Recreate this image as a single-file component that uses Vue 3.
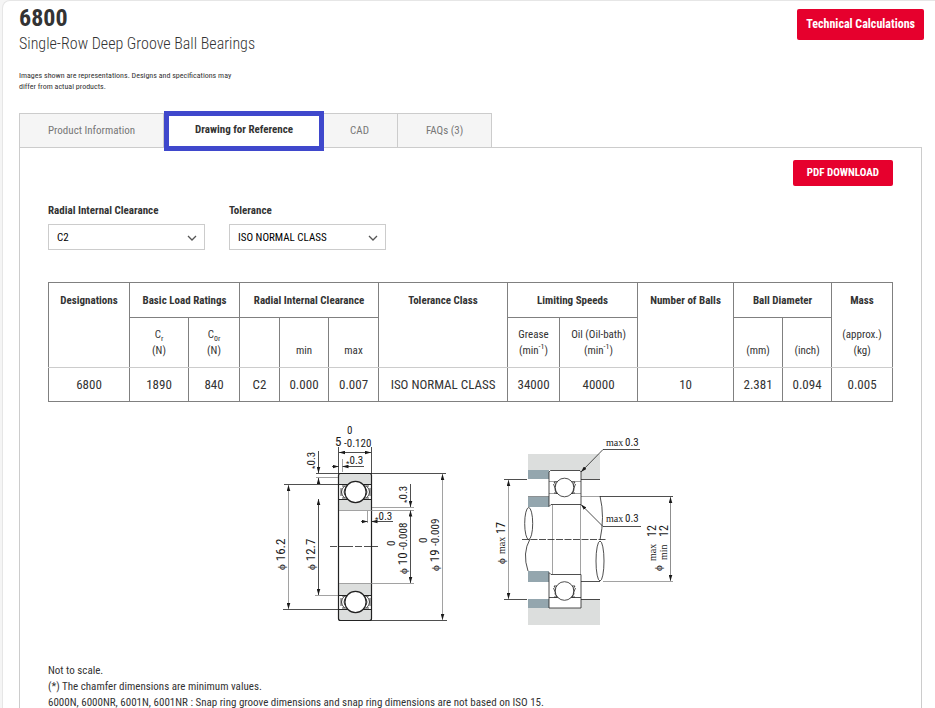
<script setup>
import { ref } from 'vue'

const clearance = ref('C2')
const tolerance = ref('ISO NORMAL CLASS')
const active = ref('drawing')

const tabs = [
  { id: 'info', label: 'Product Information' },
  { id: 'drawing', label: 'Drawing for Reference' },
  { id: 'cad', label: 'CAD' },
  { id: 'faq', label: 'FAQs (3)' }
]

const row = ['6800', '1890', '840', 'C2', '0.000', '0.007', 'ISO NORMAL CLASS', '34000', '40000', '10', '2.381', '0.094', '0.005']
</script>

<template>
  <main class="card">
    <header class="head">
      <div class="titles">
        <h1>6800</h1>
        <p class="subtitle">Single-Row Deep Groove Ball Bearings</p>
        <p class="note">Images shown are representations. Designs and specifications may differ from actual products.</p>
      </div>
      <button type="button" class="btn btn-tall">Technical Calculations</button>
    </header>

    <nav class="tabs">
      <button
        v-for="t in tabs"
        :key="t.id"
        type="button"
        :class="['tab', { active: active === t.id }]"
        @click="active = t.id"
      >{{ t.label }}</button>
    </nav>

    <section class="panel">
      <div class="actions">
        <button type="button" class="btn">PDF DOWNLOAD</button>
      </div>

      <div class="filters">
        <div class="field">
          <label for="clearance">Radial Internal Clearance</label>
          <div class="select">
            <select id="clearance" v-model="clearance"><option>C2</option></select>
            <svg class="chevron" viewBox="0 0 10 6" aria-hidden="true"><path d="M1 1l4 4 4-4" /></svg>
          </div>
        </div>
        <div class="field">
          <label for="tolerance">Tolerance</label>
          <div class="select">
            <select id="tolerance" v-model="tolerance"><option>ISO NORMAL CLASS</option></select>
            <svg class="chevron" viewBox="0 0 10 6" aria-hidden="true"><path d="M1 1l4 4 4-4" /></svg>
          </div>
        </div>
      </div>

      <table class="specs">
        <colgroup>
          <col class="w81"><col class="w59"><col class="w51"><col class="w40"><col class="w49"><col class="w50"><col class="w129"><col class="w52"><col class="w78"><col class="w96"><col class="w49"><col class="w49"><col class="w61">
        </colgroup>
        <thead>
          <tr class="groups">
            <th rowspan="2">Designations</th>
            <th colspan="2">Basic Load Ratings</th>
            <th colspan="3">Radial Internal Clearance</th>
            <th rowspan="2">Tolerance Class</th>
            <th colspan="2">Limiting Speeds</th>
            <th rowspan="2">Number of Balls</th>
            <th colspan="2">Ball Diameter</th>
            <th rowspan="2">Mass<span class="unit">(approx.)<br>(kg)</span></th>
          </tr>
          <tr class="units">
            <th>C<sub>r</sub><br>(N)</th>
            <th>C<sub>0r</sub><br>(N)</th>
            <th></th>
            <th>min</th>
            <th>max</th>
            <th>Grease<br>(min<sup>-1</sup>)</th>
            <th>Oil (Oil-bath)<br>(min<sup>-1</sup>)</th>
            <th>(mm)</th>
            <th>(inch)</th>
          </tr>
        </thead>
        <tbody>
          <tr><td v-for="(cell, i) in row" :key="i">{{ cell }}</td></tr>
        </tbody>
      </table>

      <svg class="drawing" viewBox="266 420 410 212" role="img" aria-label="Bearing dimensions">
        <defs>
          <marker id="arw" viewBox="0 0 6 4" refX="6" refY="2" markerWidth="6" markerHeight="4" markerUnits="userSpaceOnUse" orient="auto-start-reverse">
            <path d="M0 0.2L6 2L0 3.8z" fill="#1a1a1a" />
          </marker>
        </defs>

        <!-- bearing cross-section -->
        <g fill="#dcdedd">
          <rect x="338.5" y="473.5" width="33" height="11" />
          <rect x="338.5" y="499" width="33" height="11" />
          <rect x="338.5" y="584" width="33" height="11" />
          <rect x="338.5" y="609.5" width="33" height="11" />
        </g>
        <g class="seal">
          <path d="M344.500 486q-6 6 0 12M347 486.500q-6 5.500 0 11M342 486h6M342 498h6M341 488v8M366.500 486q6 6 0 12M364 486.500q6 5.500 0 11M363 486h6M363 498h6M370 488v8" />
          <path d="M344.500 596q-6 6 0 12M347 596.500q-6 5.500 0 11M342 596h6M342 608h6M341 598v8M366.500 596q6 6 0 12M364 596.500q6 5.500 0 11M363 596h6M363 608h6M370 598v8" />
        </g>
        <g class="solid">
          <path d="M338.500 484.500h33M338.500 499.500h33M338.500 595.500h33M338.500 609.500h33" />
          <rect x="338.500" y="473.500" width="33" height="147" rx="2" />
          <circle cx="355.500" cy="492" r="10.600" fill="#fff" />
          <circle cx="355.500" cy="602" r="10.600" fill="#fff" />
        </g>
        <path class="grey" d="M339 510.500h75M339 583.500h75" />
        <path class="thin" d="M330 546.500h50" stroke-dasharray="7 2 14 2" />
        <path class="thin" d="M316 473.500h130M284 484.500h54M283 609.500h55M371 620.500h76M338.500 447v27M371.500 447v27" />
        <path class="grey" d="M316 477.500h22M315 595.500h23M372 507.500h42M342.500 459v13M367.500 511v12" />
        <g class="thin">
          <path d="M339 452.500H371" marker-start="url(#arw)" marker-end="url(#arw)" />
          <path d="M332 466.500H338.500" marker-end="url(#arw)" />
          <path d="M364 466.500H342.500" marker-end="url(#arw)" />
          <path d="M318.500 451V473" marker-end="url(#arw)" />
          <path d="M318.500 484V478" marker-end="url(#arw)" />
          <path d="M318.500 499V595" marker-start="url(#arw)" marker-end="url(#arw)" />
          <path d="M410.500 484V507" marker-end="url(#arw)" />
          <path d="M410.500 510.500V583" marker-start="url(#arw)" marker-end="url(#arw)" />
          <path d="M361 521.500H367.500" marker-end="url(#arw)" />
          <path d="M393 521.500H371.500" marker-end="url(#arw)" />
        </g>
        <g class="grey">
          <path d="M288.500 485V609" marker-start="url(#arw)" marker-end="url(#arw)" />
          <path d="M442.500 474V620" marker-start="url(#arw)" marker-end="url(#arw)" />
        </g>
        <g class="dim">
          <text class="s" x="347" y="434">0</text>
          <text x="335" y="446">5</text>
          <text class="s" x="344" y="447">-0.120</text>
          <text class="s" x="346" y="464"><tspan class="xs" dy="2">*</tspan><tspan dy="-2">0.3</tspan></text>
          <text class="s" x="375" y="520"><tspan class="xs" dy="2">*</tspan><tspan dy="-2">0.3</tspan></text>
          <text class="s" transform="translate(315 469) rotate(-90)"><tspan class="xs" dy="2">*</tspan><tspan dy="-2">0.3</tspan></text>
          <text class="s" transform="translate(407 503) rotate(-90)"><tspan class="xs" dy="2">*</tspan><tspan dy="-2">0.3</tspan></text>
          <text transform="translate(285 570) rotate(-90)"><tspan class="phi">ϕ</tspan> 16.2</text>
          <text transform="translate(315 570) rotate(-90)"><tspan class="phi">ϕ</tspan> 12.7</text>
          <text transform="translate(407 574) rotate(-90)"><tspan class="phi">ϕ</tspan> 10</text>
          <text class="s" transform="translate(407 550) rotate(-90)">-0.008</text>
          <text class="s" transform="translate(395 546) rotate(-90)">0</text>
          <text transform="translate(439 571) rotate(-90)"><tspan class="phi">ϕ</tspan> 19</text>
          <text class="s" transform="translate(439 546) rotate(-90)">-0.009</text>
          <text class="s" transform="translate(427 543) rotate(-90)">0</text>
        </g>

        <!-- mounting dimensions -->
        <g fill="#dcdedd">
          <path d="M528 454h72v25h-19v-9h-53z" />
          <path d="M528 608h53v-9h19v26h-72z" />
        </g>
        <g fill="#94a6ae">
          <rect x="528" y="470" width="21" height="9" />
          <rect x="528" y="496" width="21" height="11" />
          <rect x="528" y="571" width="21" height="11" />
          <rect x="528" y="599" width="21" height="9" />
        </g>
        <path class="grey" d="M552.500 505v69M580.500 505v69M549 493.500h32M549 481.500h32M581 496.500h19M528 496.500h21M603 581.500h70M670.500 497v84" />
        <g class="thin">
          <path d="M549 472l1.500-1.500h29.500l1 1.500v32.500h-30l-2 2zM549 608v-35.500l2 2h30v33.500zM549 597.500h32" />
          <path d="M581 479.500h19M581 599.500h19M600 496.500h73M581 581.500h19" />
          <path d="M504 479.500h23M504 599.500h23" />
          <path d="M522 539.500h85" stroke-dasharray="7 1.500" />
        </g>
        <g class="seal">
          <path d="M557 482h-3l2 3-1 5 2 4M554 493h4M553.500 484l3 8M572 482h3l-2 3 1 5-2 4M571 493h4M575.500 484l-3 8" />
          <path d="M557 586h-3l2 3-1 5 2 3M554 597h4M553.500 588l3 7M572 586h3l-2 3 1 5-2 3M571 597h4M575.500 588l-3 7" />
        </g>
        <g class="thin">
          <circle cx="564.500" cy="487.500" r="9.300" fill="#fff" />
          <circle cx="564.500" cy="591" r="9.300" fill="#fff" />
          <ellipse cx="528.700" cy="523.500" rx="4" ry="16" />
          <ellipse cx="600" cy="561" rx="4" ry="20" />
          <path d="M530 539q-8 14-2 32M600 496q5 21 0 44" />
        </g>
        <g class="grey"><path d="M508.500 480V599" marker-start="url(#arw)" marker-end="url(#arw)" /></g>
        <g class="thin">
          <path d="M640 449.500H603L581 472" marker-end="url(#arw)" />
          <path d="M641 526.500H603L581 504.500" marker-end="url(#arw)" />
        </g>
        <g class="grey"><path d="M670.500 497V581" marker-start="url(#arw)" marker-end="url(#arw)" /></g>
        <g class="dim">
          <text class="serif" x="606" y="446">max</text><text class="s" x="625" y="446">0.3</text>
          <text class="serif" x="606" y="522">max</text><text class="s" x="625" y="522">0.3</text>
          <text class="phi" transform="translate(505 564) rotate(-90)">ϕ</text>
          <text class="serif" transform="translate(505 554) rotate(-90)">max</text>
          <text class="m" transform="translate(505 534) rotate(-90)">17</text>
          <text class="phi" transform="translate(662 571) rotate(-90)">ϕ</text>
          <text class="serif" transform="translate(656 561) rotate(-90)">max</text>
          <text class="m" transform="translate(656 537) rotate(-90)">12</text>
          <text class="serif" transform="translate(667 560) rotate(-90)">min</text>
          <text class="m" transform="translate(668 537) rotate(-90)">12</text>
        </g>
      </svg>

      <div class="remarks">
        <p>Not to scale.</p>
        <p>(*) The chamfer dimensions are minimum values.</p>
        <p>6000N, 6000NR, 6001N, 6001NR : Snap ring groove dimensions and snap ring dimensions are not based on ISO 15.</p>
      </div>
    </section>
  </main>
</template>

<style>
body {
  background: #f5f5f5;
}
</style>

<style scoped>
.card {
  margin-left: 2px;
  padding: 5px 13px 0 16px;
  border-top: 1px solid #e6e6e6;
  border-left: 1px solid #e6e6e6;
  border-top-left-radius: 8px;
  background: #fff;
  color: #333;
  font-family: "Roboto Condensed", "Liberation Sans Narrow", Roboto, sans-serif;
  font-size: 11px;
  line-height: 16px;
}
h1,
p {
  margin: 0;
}
button,
select {
  font: inherit;
}
.head {
  display: flex;
  justify-content: space-between;
  align-items: flex-start;
  margin-right: -2px;
}
h1 {
  font-size: 24px;
  line-height: 24px;
}
.subtitle {
  margin-top: 4px;
  font-size: 16px;
  line-height: 20px;
  font-weight: 300;
}
.note {
  max-width: 230px;
  margin-top: 16px;
  font-size: 8px;
  line-height: 11px;
}
.btn {
  height: 26px;
  padding: 0 14px;
  border: 0;
  border-radius: 2px;
  background: #e6002d;
  color: #fff;
  font-weight: 700;
}
.btn-tall {
  height: 31px;
  margin-top: 3px;
  padding: 0 9px 2px;
  font-size: 12px;
}
.tabs {
  display: flex;
  align-items: stretch;
  height: 34px;
  margin-top: 21px;
}
.tab {
  padding: 0 28px;
  border: 1px solid #ccc;
  border-bottom: 0;
  background: #f5f5f5;
  color: #777;
}
.tab + .tab {
  border-left: 0;
}
.tab.active {
  position: relative;
  margin: -2px -2px -4px 0;
  padding: 0 26px 2px;
  border: 5px solid #3f48cc;
  background: #fff;
  color: #333;
  font-weight: 700;
}
.panel {
  padding: 12px 28px 40px;
  border: 1px solid #ccc;
}
.actions {
  display: flex;
  justify-content: flex-end;
}
.filters {
  display: flex;
  gap: 24px;
  margin-top: 17px;
}
.field {
  display: flex;
  flex-direction: column;
  gap: 5px;
  width: 157px;
}
.field label {
  font-weight: 700;
}
.select {
  display: grid;
  align-items: center;
}
.select > * {
  grid-area: 1 / 1;
}
select {
  width: 100%;
  height: 26px;
  padding: 1px 8px 0;
  border: 1px solid #ccc;
  border-radius: 0;
  background: #fff;
  color: #000;
  appearance: none;
}
.chevron {
  justify-self: end;
  width: 10px;
  height: 6px;
  margin-right: 8px;
  margin-top: 2px;
  fill: none;
  stroke: #555;
  stroke-width: 1.3;
  pointer-events: none;
}
.specs {
  width: 100%;
  margin-top: 32px;
  border-collapse: collapse;
  table-layout: fixed;
  text-align: center;
}
.w40 { width: 40px; }
.w49 { width: 49px; }
.w50 { width: 50px; }
.w51 { width: 51px; }
.w52 { width: 52px; }
.w59 { width: 59px; }
.w61 { width: 61px; }
.w78 { width: 78px; }
.w81 { width: 81px; }
.w96 { width: 96px; }
.w129 { width: 129px; }
th,
td {
  padding: 0;
  border: 1px solid #808080;
  white-space: nowrap;
}
.groups th {
  height: 24px;
  padding-top: 10px;
  vertical-align: top;
}
.units th {
  height: 32px;
  padding: 9px 0 8px;
  vertical-align: bottom;
  font-weight: 400;
}
.unit {
  display: block;
  margin-top: 18px;
  font-weight: 400;
}
tbody td {
  height: 33px;
  border-top-color: #ccc;
  font-size: 13px;
}
.units th,
th[rowspan] {
  border-bottom-color: #ccc;
}
sub,
sup {
  font-size: 8px;
  line-height: 0;
}
.drawing {
  display: block;
  width: 410px;
  height: 212px;
  margin: 18px auto 0;
}
.thin,
.grey,
.solid,
.seal {
  fill: none;
  stroke: #222;
  stroke-width: 0.8;
}
.grey {
  stroke: #8a8a8a;
}
.solid {
  stroke-width: 1.2;
}
.dim {
  fill: #1a1a1a;
  font-size: 13px;
}
.m {
  font-size: 12px;
}
.s {
  font-size: 11px;
}
.xs {
  font-size: 8px;
}
.phi {
  font-family: "Liberation Serif", serif;
  font-size: 11px;
}
.serif {
  font-family: "Liberation Serif", serif;
  font-size: 10px;
}
.remarks {
  margin-top: 31px;
}
</style>
